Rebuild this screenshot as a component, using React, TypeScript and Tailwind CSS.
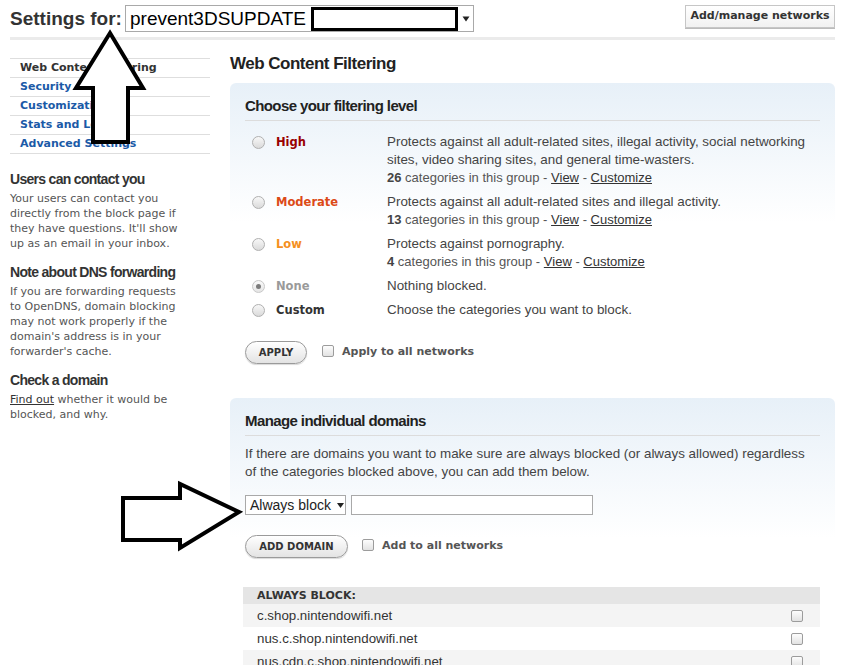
import React from "react";

const verdana = "font-['DejaVu_Sans',Verdana,sans-serif]";
const arial = "font-['Liberation_Sans',Arial,sans-serif]";

type Level = {
  name: string;
  color: string;
  lines: string[];
  count?: number;
  checked?: boolean;
  dim?: boolean;
};

const levels: Level[] = [
  {
    name: "High",
    color: "text-[#990000]",
    lines: [
      "Protects against all adult-related sites, illegal activity, social networking",
      "sites, video sharing sites, and general time-wasters.",
    ],
    count: 26,
  },
  {
    name: "Moderate",
    color: "text-[#dc4a17]",
    lines: ["Protects against all adult-related sites and illegal activity."],
    count: 13,
  },
  {
    name: "Low",
    color: "text-[#f5901e]",
    lines: ["Protects against pornography."],
    count: 4,
  },
  { name: "None", color: "text-[#9a9a9a]", lines: ["Nothing blocked."], checked: true, dim: true },
  { name: "Custom", color: "text-[#333]", lines: ["Choose the categories you want to block."] },
];

const domains = ["c.shop.nintendowifi.net", "nus.c.shop.nintendowifi.net", "nus.cdn.c.shop.nintendowifi.net"];

function Radio({ checked, dim }: { checked?: boolean; dim?: boolean }) {
  return (
    <span
      className={`flex h-[13px] w-[13px] items-center justify-center rounded-full border border-[#b0b0b0] bg-[linear-gradient(to_bottom,#f8f8f8,#dadada)] ${dim ? "opacity-70" : ""}`}
    >
      {checked && <span className="h-[5px] w-[5px] rounded-full bg-[#444]" />}
    </span>
  );
}

function Checkbox() {
  return (
    <span className="block h-[12px] w-[12px] rounded-[2px] border border-[#9c9c9c] bg-[linear-gradient(to_bottom,#fdfdfd,#e2e2e2)]" />
  );
}

function PillButton({ label, width }: { label: string; width: string }) {
  return (
    <button
      className={`${verdana} ${width} h-[23px] rounded-full border border-[#9a9a9a] bg-[linear-gradient(to_bottom,#ffffff,#e3e3e3)] text-[10px] font-bold text-[#333] shadow-[0_1px_1px_rgba(0,0,0,0.15)]`}
    >
      {label}
    </button>
  );
}

function Header() {
  return (
    <div className="flex h-[32px] items-start pl-[10px] pr-[8px] pt-[5px]">
      <div className={`${arial} w-[115px] text-[19px] font-bold leading-[27px] text-[#333]`}>
        Settings for:
      </div>
      <div className="flex h-[27px] w-[349px] items-center border border-[#a9a9a9] bg-white">
        <span className={`${arial} pl-[4px] text-[19px] leading-[25px] text-black`}>prevent3DSUPDATE</span>
        <span className="ml-[5px] h-[24px] w-[147px] border-[3px] border-black bg-white" />
        <svg className="ml-[4px]" width="8" height="6" viewBox="0 0 8 6">
          <path d="M0.5 0.5 L7.5 0.5 L4 5.5 Z" fill="#222" />
        </svg>
      </div>
      <button
        className={`${verdana} ml-auto h-[23px] w-[150px] border border-[#c6c6c6] bg-[linear-gradient(to_bottom,#ffffff,#f1f1f1)] text-[11px] font-bold text-[#333] shadow-[0_1px_0_#bbb]`}
      >
        Add/manage networks
      </button>
    </div>
  );
}

function Sidebar() {
  const nav = ["Web Content Filtering", "Security", "Customization", "Stats and Logs", "Advanced Settings"];
  const notes: { title: string; body: React.ReactNode }[] = [
    {
      title: "Users can contact you",
      body: (
        <>
          Your users can contact you
          <br />
          directly from the block page if
          <br />
          they have questions. It'll show
          <br />
          up as an email in your inbox.
        </>
      ),
    },
    {
      title: "Note about DNS forwarding",
      body: (
        <>
          If you are forwarding requests
          <br />
          to OpenDNS, domain blocking
          <br />
          may not work properly if the
          <br />
          domain's address is in your
          <br />
          forwarder's cache.
        </>
      ),
    },
    {
      title: "Check a domain",
      body: (
        <>
          <a className="text-[#333] underline">Find out</a> whether it would be
          <br />
          blocked, and why.
        </>
      ),
    },
  ];

  return (
    <div className="ml-[10px] w-[200px] pt-[18px]">
      <ul className="border-t border-[#dedede]">
        {nav.map((item, i) => (
          <li
            key={item}
            className={`${verdana} h-[19px] border-b border-[#dedede] pl-[10px] text-[11px] font-bold leading-[18px] ${i === 0 ? "text-[#333]" : "text-[#1b5aa7]"}`}
          >
            {item}
          </li>
        ))}
      </ul>
      <div className="mt-[17px] flex flex-col gap-[13px]">
        {notes.map((n) => (
          <div key={n.title}>
            <div className={`${arial} text-[14px] font-bold leading-[16px] tracking-[-0.7px] text-[#333]`}>
              {n.title}
            </div>
            <div className={`${verdana} mt-[4px] whitespace-nowrap text-[11px] leading-[15px] text-[#555]`}>
              {n.body}
            </div>
          </div>
        ))}
      </div>
    </div>
  );
}

function PanelTitle({ children }: { children: React.ReactNode }) {
  return (
    <div
      className={`${arial} border-b border-[#dcdcdc] pb-[5px] text-[15px] font-bold leading-[18px] tracking-[-0.6px] text-[#222]`}
    >
      {children}
    </div>
  );
}

function FilterPanel() {
  return (
    <div className="rounded-[6px] bg-[linear-gradient(to_bottom,#e7f0f8,#ffffff_140px)] px-[15px] pb-[14px] pt-[14px]">
      <PanelTitle>Choose your filtering level</PanelTitle>
      <div className="mt-[12px] flex flex-col gap-[6px]">
        {levels.map((lv) => (
          <div key={lv.name} className="flex">
            <div className="flex h-[18px] w-[31px] items-center pl-[7px]">
              <Radio checked={lv.checked} dim={lv.dim} />
            </div>
            <div className={`${verdana} w-[111px] text-[11.5px] font-bold leading-[18px] ${lv.color}`}>{lv.name}</div>
            <div className="flex-1 whitespace-nowrap">
              {lv.lines.map((l) => (
                <div key={l} className={`${arial} text-[13.4px] leading-[18px] text-[#444]`}>
                  {l}
                </div>
              ))}
              {lv.count !== undefined && (
                <div className={`${arial} text-[13px] leading-[18px] text-[#555]`}>
                  <b className="text-[#444]">{lv.count}</b> categories in this group -{" "}
                  <a className="text-[#333] underline">View</a> - <a className="text-[#333] underline">Customize</a>
                </div>
              )}
            </div>
          </div>
        ))}
      </div>
      <div className="mt-[22px] flex items-center">
        <PillButton label="APPLY" width="w-[62px]" />
        <span className="ml-[15px] -mt-[3px]">
          <Checkbox />
        </span>
        <span className={`${verdana} ml-[8px] text-[11px] font-bold text-[#555]`}>Apply to all networks</span>
      </div>
    </div>
  );
}

function DomainPanel() {
  return (
    <div className="mt-[20px] rounded-[6px] bg-[linear-gradient(to_bottom,#e7f0f8,#ffffff_140px)] px-[15px] pt-[14px]">
      <PanelTitle>Manage individual domains</PanelTitle>
      <p className={`${arial} mt-[9px] whitespace-nowrap text-[13.4px] leading-[17.5px] text-[#444]`}>
        If there are domains you want to make sure are always blocked (or always allowed) regardless
        <br />
        of the categories blocked above, you can add them below.
      </p>
      <div className="mt-[15px] flex items-center">
        <div className="flex h-[20px] w-[101px] items-center border border-[#a9a9a9] bg-white pl-[4px]">
          <span className={`${arial} text-[14px] leading-[18px] text-[#222]`}>Always block</span>
          <svg className="ml-[6px]" width="7" height="5" viewBox="0 0 7 5">
            <path d="M0 0 L7 0 L3.5 5 Z" fill="#222" />
          </svg>
        </div>
        <div className="ml-[5px] h-[20px] w-[242px] border border-[#a9a9a9] bg-white" />
      </div>
      <div className="mt-[20px] flex items-center">
        <PillButton label="ADD DOMAIN" width="w-[103px]" />
        <span className="ml-[14px] -mt-[3px]">
          <Checkbox />
        </span>
        <span className={`${verdana} ml-[8px] text-[11px] font-bold text-[#555]`}>Add to all networks</span>
      </div>
      <div className="-ml-[2px] mt-[29px]">
        <div className={`${verdana} h-[17px] bg-[#e5e5e5] pl-[14px] text-[11px] font-bold leading-[17px] text-[#333]`}>
          ALWAYS BLOCK:
        </div>
        {domains.map((d, i) => (
          <div
            key={d}
            className={`flex h-[23px] items-center justify-between pl-[14px] pr-[17px] ${i % 2 === 0 ? "bg-[#f4f4f4]" : "bg-white"}`}
          >
            <span className={`${arial} text-[13.3px] text-[#333]`}>{d}</span>
            <Checkbox />
          </div>
        ))}
      </div>
    </div>
  );
}

function Main() {
  return (
    <div className="ml-[20px] w-[605px] pt-[14px]">
      <h1 className={`${arial} mb-[9px] text-[17px] font-bold leading-[20px] tracking-[-0.5px] text-[#222]`}>
        Web Content Filtering
      </h1>
      <FilterPanel />
      <DomainPanel />
    </div>
  );
}

export default function App() {
  return (
    <div className="relative h-[665px] w-[843px] overflow-hidden bg-white text-[#333]">
      <Header />
      <div className="ml-[10px] mr-[8px] mt-[5px] h-[3px] bg-[#ebebeb]" />
      <div className="flex">
        <Sidebar />
        <Main />
      </div>
      {/* annotation arrows drawn over the page */}
      <svg className="pointer-events-none absolute left-0 top-0" width="843" height="665">
        <polygon
          points="110,33 143,88 128,88 128,142 93,142 93,88 76,88"
          fill="white"
          stroke="black"
          strokeWidth="4"
          strokeLinejoin="miter"
        />
        <polygon
          points="123,498 180,498 180,484 239,512 180,548 180,540 123,540"
          fill="white"
          stroke="black"
          strokeWidth="4"
          strokeLinejoin="miter"
        />
      </svg>
    </div>
  );
}
